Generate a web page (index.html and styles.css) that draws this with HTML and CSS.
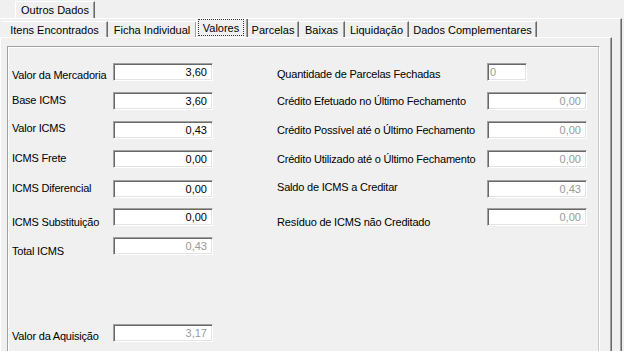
FILE: index.html
```html
<!DOCTYPE html>
<html>

<head>
    <meta charset="UTF-8">
    <title>Outros Dados - Valores</title>
    <link rel="stylesheet" href="styles.css">
</head>

<body>
    <div class="window">
        <!-- aba externa -->
        <div class="outer-tabs">
            <div class="outer-tab">Outros Dados</div>
        </div>

        <div class="outer-page">
            <!-- abas internas -->
            <div class="tabs">
                <div class="tab w-itens">Itens Encontrados</div>
                <div class="tab w-ficha">Ficha Individual</div>
                <div class="tab w-valores active"><span class="focus">Valores</span></div>
                <div class="tab w-parcelas">Parcelas</div>
                <div class="tab w-baixas">Baixas</div>
                <div class="tab w-liq">Liquidação</div>
                <div class="tab w-dados">Dados Complementares</div>
            </div>

            <div class="page">
                <div class="panel">
                    <div class="col col-left">
                        <div class="row"><label class="lbl pad6">Valor da Mercadoria</label><input class="field" value="3,60"></div>
                        <div class="row"><label class="lbl pad2">Base ICMS</label><input class="field" value="3,60"></div>
                        <div class="row"><label class="lbl pad1">Valor ICMS</label><input class="field" value="0,43"></div>
                        <div class="row"><label class="lbl pad2">ICMS Frete</label><input class="field" value="0,00"></div>
                        <div class="row gap1"><label class="lbl pad2">ICMS Diferencial</label><input class="field" value="0,00"></div>
                        <div class="row"><label class="lbl pad8">ICMS Substituição</label><input class="field" value="0,00"></div>
                        <div class="row"><label class="lbl pad8">Total ICMS</label><input class="field off" value="0,43" disabled></div>
                        <div class="row last"><label class="lbl pad6">Valor da Aquisição</label><input class="field off" value="3,17" disabled></div>
                    </div>

                    <div class="col col-right">
                        <div class="row"><label class="lbl pad5">Quantidade de Parcelas Fechadas</label><input class="field off small" value="0" disabled></div>
                        <div class="row"><label class="lbl pad3">Crédito Efetuado no Último Fechamento</label><input class="field off" value="0,00" disabled></div>
                        <div class="row"><label class="lbl pad3">Crédito Possível até o Último Fechamento</label><input class="field off" value="0,00" disabled></div>
                        <div class="row"><label class="lbl pad3">Crédito Utilizado até o Último Fechamento</label><input class="field off" value="0,00" disabled></div>
                        <div class="row gap1"><label class="lbl pad1">Saldo de ICMS a Creditar</label><input class="field off" value="0,43" disabled></div>
                        <div class="row"><label class="lbl pad8">Resíduo de ICMS não Creditado</label><input class="field off" value="0,00" disabled></div>
                    </div>
                </div>
            </div>
        </div>
    </div>
</body>

</html>
```

FILE: styles.css
```css
* {
    margin: 0;
    padding: 0;
    box-sizing: border-box;
}

body {
    font-family: 'Liberation Sans', Arial, sans-serif;
    font-size: 11px;
    color: #000;
    background-color: #f0f0f0;
    width: 624px;
    height: 351px;
    overflow: hidden;
}

.window {
    width: 624px;
}

/* aba externa */
.outer-tabs {
    height: 18px;
    display: flex;
    align-items: flex-end;
    padding-left: 15px;
}

.outer-tab {
    width: 80px;
    height: 17px;
    display: flex;
    justify-content: center;
    align-items: center;
    border-top: 1px solid #fff;
    border-left: 1px solid #fff;
    border-right: 1px solid #696969;
    box-shadow: inset -1px 0 0 #a0a0a0;
}

.outer-page {
    width: 622px;
    height: 333px;
    overflow: hidden;
    border-top: 1px solid #fff;
    border-right: 1px solid #696969;
    box-shadow: inset -1px 0 0 #a0a0a0;
}

/* abas internas */
.tabs {
    height: 18px;
    display: flex;
    align-items: flex-end;
    padding-left: 2px;
}

.tab {
    height: 16px;
    display: flex;
    justify-content: center;
    align-items: center;
    white-space: nowrap;
    border-top: 1px solid #fff;
    border-right: 1px solid #696969;
    box-shadow: inset -1px 0 0 #a0a0a0;
    background-color: #f0f0f0;
}

.tab.active {
    height: 20px;
    margin-left: -1px;
    padding: 1px 3px 1px 1px;
    border-left: 1px solid #fff;
}

.focus {
    flex: 1;
    height: 100%;
    display: flex;
    justify-content: center;
    align-items: center;
    border: 1px dotted #333;
}

.w-itens { width: 106px; }
.w-ficha { width: 89px; }
.w-valores { width: 52px; }
.w-parcelas { width: 51px; }
.w-baixas { width: 46px; }
.w-liq { width: 64px; }
.w-dados { width: 128px; }

.page {
    width: 612px;
    height: 320px;
    border-top: 1px solid #fff;
    border-left: 1px solid #fff;
    border-right: 1px solid #696969;
    box-shadow: inset -1px 0 0 #a0a0a0;
    padding: 8px 0 0 6px;
}

.panel {
    width: 593px;
    height: 320px;
    border-top: 1px solid #a0a0a0;
    border-left: 1px solid #a0a0a0;
    border-right: 1px solid #fff;
    box-shadow: inset -1px 0 0 #c8c8c8, inset 1px 1px 0 #fff;
    display: flex;
    padding: 16px 0 0 4px;
}

.col {
    display: flex;
    flex-direction: column;
    gap: 11px;
}

.col-left {
    width: 202px;
}

.col-right {
    margin-left: 63px;
}

.row {
    display: flex;
    height: 18px;
}

/* uma linha desce 1px, a seguinte volta ao lugar */
.row.gap1 {
    margin-top: 1px;
}

.row.gap1 + .row {
    margin-top: -1px;
}

.row.last {
    margin-top: 58px;
}

.lbl {
    line-height: 13px;
    letter-spacing: -0.2px;
    white-space: nowrap;
}

.col-left .lbl {
    width: 101px;
}

.col-right .lbl {
    width: 210px;
}

.pad1 { padding-top: 1px; }
.pad2 { padding-top: 2px; }
.pad3 { padding-top: 3px; }
.pad5 { padding-top: 5px; }
.pad6 { padding-top: 6px; }
.pad8 { padding-top: 8px; }

/* caixas de texto */
.field {
    width: 100px;
    height: 18px;
    font-family: 'Liberation Sans', Arial, sans-serif;
    font-size: 11px;
    color: #000;
    text-align: right;
    padding: 0 5px 0 2px;
    background-color: #fff;
    border: 1px solid;
    border-color: #a0a0a0 #fff #fff #a0a0a0;
    box-shadow: inset 1px 1px 0 #696969, inset -1px -1px 0 #e3e3e3;
    outline: none;
}

.field.off {
    color: #999;
    background-color: #fff;
}

.field.small {
    width: 40px;
    text-align: left;
    padding-left: 2px;
}
```
